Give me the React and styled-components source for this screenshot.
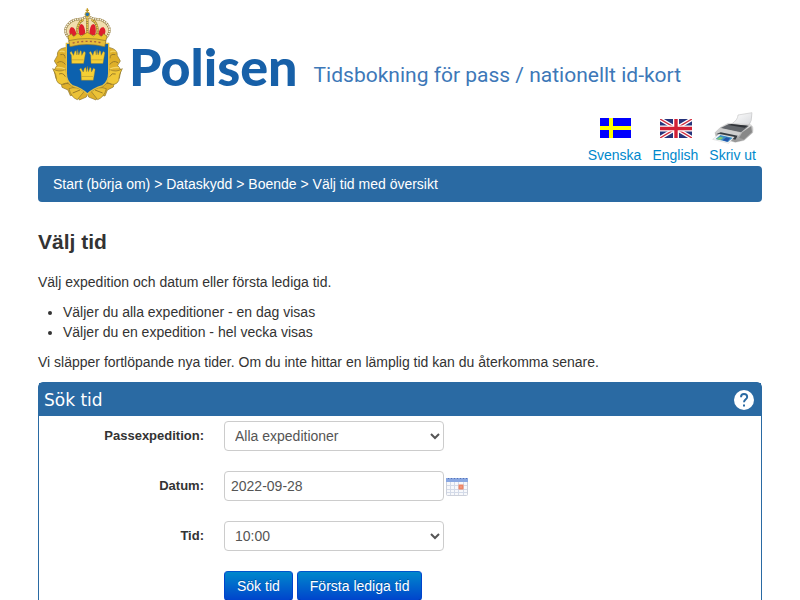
import React from "react";
import styled, { createGlobalStyle } from "styled-components";

const Global = createGlobalStyle`
  * { box-sizing: border-box; }
  body {
    margin: 0;
    background: #fff;
    color: #333;
    font: 14px/20px "Liberation Sans", Arial, sans-serif;
  }
`;

const Page = styled.div`
  padding: 0 38px;
`;

const Masthead = styled.header`
  display: flex;
  align-items: flex-start;
  height: 108px;
  padding: 6px 0 0 12px;
`;

const Brand = styled.div`
  display: flex;
  gap: 3px;
`;

const Wordmark = styled.span`
  padding-top: 30px;
  color: #1760a8;
  font: 900 52px/60px Lato, sans-serif;
`;

const Tagline = styled.span`
  padding: 53px 0 0 16px;
  color: #3d78b8;
  font: 21px/32px Roboto, sans-serif;
  white-space: nowrap;
`;

const Tools = styled.nav`
  display: flex;
  justify-content: flex-end;
  gap: 11px;
  padding: 0 6px 1px 0;
`;

const Tool = styled.a`
  display: flex;
  flex-direction: column;
  align-items: center;
  color: #0088cc;
  text-decoration: none;
`;

const ToolIcon = styled.span`
  display: flex;
  align-items: center;
  height: 37px;
  padding: 3px 0 0 2px;
`;

const Crumbs = styled.nav`
  padding: 8px 15px;
  border-radius: 4px;
  background: #2a6aa3;
  color: #fff;
`;

const Crumb = styled.a`
  color: #fff;
  text-decoration: none;
`;

const Title = styled.h1`
  margin: 30px 0 20px;
  font-size: 21px;
  line-height: 20px;
`;

const Text = styled.p`
  margin: 0 0 10px;
`;

const Bullets = styled.ul`
  margin: 0 0 10px 25px;
  padding: 0;
`;

const Panel = styled.section`
  border: 1px solid #2a6aa3;
  border-radius: 5px 5px 0 0;
`;

const PanelHead = styled.div`
  display: flex;
  align-items: center;
  justify-content: space-between;
  height: 33px;
  padding: 0 7px 0 5px;
  background: #2a6aa3;
  color: #fff;
`;

const PanelTitle = styled.h2`
  margin: 0;
  font: 17px/20px "DejaVu Sans", Verdana, sans-serif;
`;

const IconButton = styled.button`
  display: flex;
  padding: 0;
  border: 0;
  background: none;
  cursor: pointer;
`;

const Form = styled.form`
  display: grid;
  grid-template-columns: 165px 1fr;
  gap: 20px;
  padding: 5px 0 20px;
`;

const Label = styled.label`
  padding-top: 5px;
  font-size: 13px;
  font-weight: bold;
  text-align: right;
`;

const Field = styled.div`
  display: flex;
  align-items: center;
  gap: 2px;
`;

const Select = styled.select`
  width: 220px;
  height: 30px;
  padding: 4px 6px;
  border: 1px solid #ccc;
  border-radius: 4px;
  background: #fff;
  color: #555;
  font: inherit;
`;

const Input = styled.input`
  width: 220px;
  height: 30px;
  padding: 4px 6px;
  border: 1px solid #ccc;
  border-radius: 4px;
  color: #555;
  font: inherit;
`;

const Actions = styled.div`
  display: flex;
  grid-column: 2;
  gap: 4px;
`;

const Button = styled.button`
  padding: 4px 12px;
  border: 1px solid #0044cc;
  border-color: #0055cc #0044cc #002a80;
  border-radius: 4px;
  background: linear-gradient(#0088cc, #0044cc);
  color: #fff;
  font: inherit;
  text-shadow: 0 -1px 0 rgba(0, 0, 0, 0.25);
`;

const SmallCrown = ({ x, y }) => (
  <g transform={`translate(${x} ${y}) scale(1.12)`} fill="#f5cf35" stroke="#8a7430" strokeWidth="1">
    <path d="M-17-8-21-15-17-19-11-8-8-18-4-21-2-9 0-24 3-9 7-21 10-18 11-8 17-19 21-15 16 14H-16Z" />
    <path d="M-15 4H15" fill="none" />
  </g>
);

const Crest = () => (
  <svg width="76" height="98" viewBox="30 18 228 294" role="img" aria-label="Riksvapen">
    <g fill="#dfb02a" stroke="#8d742b" strokeWidth="2">
      <path d="M74 143Q50 147 52 167L43 183 51 196 42 211 48 236 63 246 66 262 84 270 91 287 108 283 118 300 139 291 142 282 146 291 168 300 178 284 195 288 202 270 220 261 223 245 238 235 243 210 233 196 241 183 232 167Q233 148 210 143Z" />
      <path d="M38 206Q57 219 77 208L86 247Q60 262 50 242 50 223 38 206M247 206Q228 219 208 208L200 247Q226 262 236 242 236 223 247 206" fill="#f0c838" />
      <path d="M87 266Q111 257 132 275L112 299Q93 292 87 266M199 266Q174 257 154 275L173 299Q193 291 199 266" fill="#ebc237" />
      <path d="M61 164Q76 160 76 175M52 188Q65 179 77 194M57 222Q70 217 76 230M226 164Q210 160 210 175M234 188Q219 179 209 194M227 222Q215 217 209 230M68 253Q85 243 100 263M215 253Q199 243 186 263M98 279 120 270M188 279 165 270" fill="none" stroke="#9b7c28" strokeWidth="3" />
      <path d="M59 155Q68 151 74 157M49 203Q65 201 75 207M227 155Q217 151 211 157M237 203Q221 201 210 207" fill="none" stroke="#f4d564" strokeWidth="4" />
    </g>
    <path d="M79 130H206V220Q206 245 188 257 160 265 142 282 125 265 97 257 79 245 79 220Z" fill="#0c61ae" stroke="#e2be45" strokeWidth="4" />
    <SmallCrown x={113} y={175} />
    <SmallCrown x={171} y={175} />
    <SmallCrown x={142} y={225} />
    <path d="M91 119Q66 94 83 74 97 56 123 57L142 49 163 57Q189 56 203 74 218 94 194 119Z" fill="#f1dfae" />
    <path d="M91 108Q84 91 93 82 106 78 110 108ZM118 106Q113 75 124 72 136 75 136 106ZM148 106Q148 75 160 72 171 75 166 106ZM174 108Q178 78 191 82 201 91 192 108Z" fill="#de1f2d" />
    <path d="M91 119Q66 94 83 74 97 56 123 57L142 49 163 57Q189 56 203 74 218 94 194 119M142 51V109M130 59Q108 69 112 110M155 59Q177 69 172 110" fill="none" stroke="#8c7433" strokeWidth="7" />
    <path d="M91 119Q66 94 83 74 97 56 123 57L142 49 163 57Q189 56 203 74 218 94 194 119" fill="none" stroke="#f6f0df" strokeWidth="5" strokeDasharray="5 2" />
    <path d="M142 51V109M130 59Q108 69 112 110M155 59Q177 69 172 110" fill="none" stroke="#edc94f" strokeWidth="5" strokeDasharray="5 2" />
    <path d="M84 109 94 101 101 110 113 99 124 108 142 97 160 108 172 99 184 110 191 101 201 109 195 130Q142 115 89 130Z" fill="#edc52e" stroke="#8d742b" strokeWidth="2" />
    <path d="M86 122Q142 109 198 122L194 140Q142 127 90 140Z" fill="#e6bd3b" stroke="#8d742b" strokeWidth="2" />
    <path d="M98 129Q142 119 187 129" fill="none" stroke="#a85d40" strokeWidth="4" strokeDasharray="6 7" />
    <circle cx="142" cy="43" r="7" fill="#2770ad" stroke="#d6ac29" strokeWidth="3" />
    <path d="M142 25V37M137 31H147" stroke="#c49a22" strokeWidth="4" />
  </svg>
);

const Sweden = () => (
  <svg width="31" height="20" viewBox="0 0 31 20" aria-hidden="true">
    <path fill="#0000fe" d="M0 0H31V20H0z" />
    <path fill="#ff0" d="M9 0H13V20H9zM0 8H31V12H0z" />
  </svg>
);

const Britain = () => (
  <svg width="32" height="19" viewBox="0 0 32 19" aria-hidden="true">
    <path fill="#26337b" d="M0 0H32V19H0z" />
    <path d="M0 0 32 19M32 0 0 19" stroke="#fff" strokeWidth="4" />
    <path d="M0 0 32 19M32 0 0 19" stroke="#d22e3f" strokeWidth="1.4" />
    <path d="M16 0V19M0 9.5H32" stroke="#fff" strokeWidth="6" />
    <path d="M16 0V19M0 9.5H32" stroke="#d22035" strokeWidth="3.4" />
  </svg>
);

const Printer = () => (
  <svg width="44" height="32" viewBox="0 0 132 96" aria-hidden="true">
    <defs>
      <linearGradient id="paper" x2="1" y2="1">
        <stop stopColor="#fff" />
        <stop offset="1" stopColor="#d5d7db" />
      </linearGradient>
      <linearGradient id="case" x2="0" y2="1">
        <stop stopColor="#e5e5e5" />
        <stop offset="1" stopColor="#929292" />
      </linearGradient>
    </defs>
    <path d="M57 37Q78 24 78 9L120 2Q122 27 106 48Z" fill="url(#paper)" stroke="#b8b8b8" strokeWidth="1.5" />
    <path d="M24 47 48 34 116 38Q126 43 122 62L96 85 70 91 12 74 9 62Z" fill="url(#case)" stroke="#aaa" />
    <path d="M26 48 50 36 111 41 87 61Z" fill="#62666b" />
    <path d="M49 39 58 36 107 41 98 47Z" fill="#303338" />
    <path d="M9 64 24 49 87 62 77 75Z" fill="#cecece" />
    <path d="M14 66 26 61 77 71 70 83Z" fill="#343a40" />
    <path d="M2 82 21 66 67 75 50 94Z" fill="#f8f8f8" stroke="#b9b9b9" />
    <path d="M11 81 25 69 62 77 48 90Z" fill="#3d8fc4" />
    <path d="M13 81 24 74 34 77 25 84Z" fill="#82c874" />
    <path d="M32 85 43 76 54 79 46 89Z" fill="#2454a8" />
    <path d="M91 61 118 42 120 61 96 82 81 78Z" fill="#888" />
  </svg>
);

const Calendar = () => (
  <svg width="22" height="20" viewBox="0 0 22 20" aria-hidden="true">
    <rect x="0.5" y="2.5" width="21" height="17" rx="1" fill="#f7f8fb" stroke="#ccd0da" />
    <path fill="#8aa8e2" d="M0 2H22V6H0z" />
    <path d="M2 2.5H21" stroke="#5873b4" strokeDasharray="1 2" />
    <path d="M1 9.5H21M1 13.5H21M1 16.5H21M4.5 6V19M8.5 6V19M12.5 6V19M17.5 6V19" stroke="#d3dae8" />
    <path d="M13.5 9.5H16.5V12.5H13.5z" fill="#f9c9b9" stroke="#ee8566" strokeWidth="2" />
  </svg>
);

const Help = () => (
  <svg width="20" height="20" viewBox="0 0 20 20" aria-hidden="true">
    <circle cx="10" cy="10" r="10" fill="#fff" />
    <path d="M7 7.2C7 5.2 8.2 4 10 4S13.2 5.2 13.2 6.9C13.2 9.2 10 9.4 10 12.3" fill="none" stroke="#2a6aa3" strokeWidth="1.9" />
    <path d="M9 14.6H11V16.6H9z" fill="#2a6aa3" />
  </svg>
);

const tools = [
  ["Svenska", Sweden],
  ["English", Britain],
  ["Skriv ut", Printer],
];

const crumbs = ["Start (börja om)", "Dataskydd", "Boende", "Välj tid med översikt"];

export default function App() {
  return (
    <>
      <Global />
      <Page>
        <Masthead>
          <Brand>
            <Crest />
            <Wordmark>Polisen</Wordmark>
          </Brand>
          <Tagline>Tidsbokning för pass / nationellt id-kort</Tagline>
        </Masthead>
        <Tools aria-label="Verktyg">
          {tools.map(([name, Icon]) => (
            <Tool href="#" key={name}>
              <ToolIcon><Icon /></ToolIcon>
              {name}
            </Tool>
          ))}
        </Tools>
        <Crumbs aria-label="Sökväg">
          {crumbs.map((name, i) => (
            <React.Fragment key={name}>
              {i > 0 && " > "}
              <Crumb href="#">{name}</Crumb>
            </React.Fragment>
          ))}
        </Crumbs>
        <main>
          <Title>Välj tid</Title>
          <Text>Välj expedition och datum eller första lediga tid.</Text>
          <Bullets>
            <li>Väljer du alla expeditioner - en dag visas</li>
            <li>Väljer du en expedition - hel vecka visas</li>
          </Bullets>
          <Text>
            Vi släpper fortlöpande nya tider. Om du inte hittar en lämplig tid kan du återkomma senare.
          </Text>
          <Panel>
            <PanelHead>
              <PanelTitle>Sök tid</PanelTitle>
              <IconButton type="button" aria-label="Hjälp"><Help /></IconButton>
            </PanelHead>
            <Form onSubmit={(e) => e.preventDefault()}>
              <Label htmlFor="office">Passexpedition:</Label>
              <Field>
                <Select id="office"><option>Alla expeditioner</option></Select>
              </Field>
              <Label htmlFor="date">Datum:</Label>
              <Field>
                <Input id="date" type="text" defaultValue="2022-09-28" />
                <IconButton type="button" aria-label="Välj datum"><Calendar /></IconButton>
              </Field>
              <Label htmlFor="time">Tid:</Label>
              <Field>
                <Select id="time"><option>10:00</option></Select>
              </Field>
              <Actions>
                <Button type="submit">Sök tid</Button>
                <Button type="button">Första lediga tid</Button>
              </Actions>
            </Form>
          </Panel>
        </main>
      </Page>
    </>
  );
}
